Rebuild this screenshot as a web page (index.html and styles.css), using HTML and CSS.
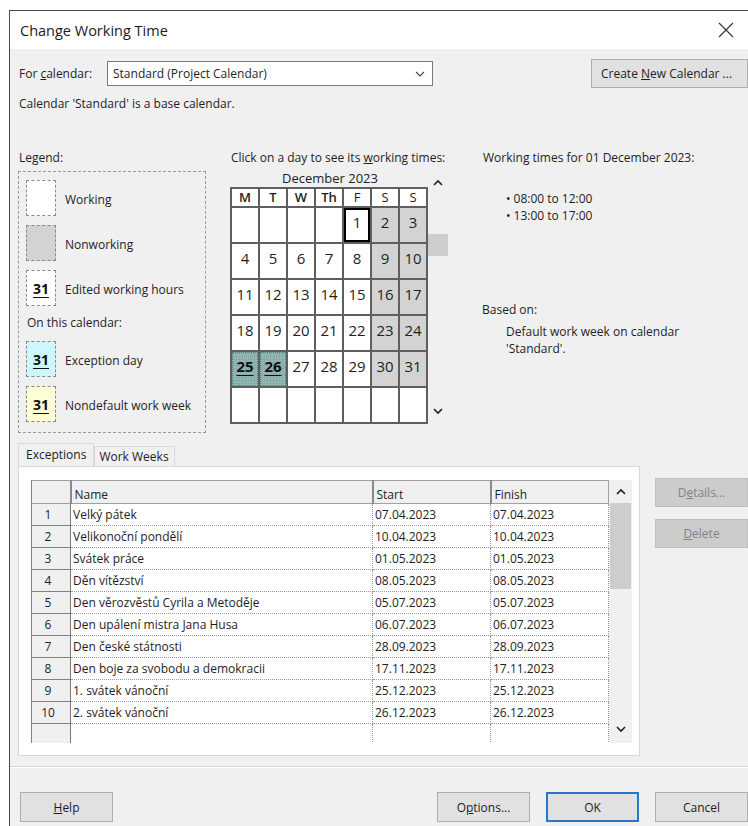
FILE: index.html
```html
<!DOCTYPE html>
<html lang="en">
<head>
<meta charset="utf-8">
<title>Change Working Time</title>
<link rel="stylesheet" href="styles.css">
</head>
<body>
<div class="dialog">
  <div class="titlebar">
    <span class="title">Change Working Time</span>
    <svg class="close" width="16" height="16" viewBox="0 0 16 16"><path d="M1 1L15 15M15 1L1 15" stroke="#333" stroke-width="1.1" fill="none"/></svg>
  </div>

  <div class="content">
    <div class="cal-row">
      <span class="lbl">For <u>c</u>alendar:</span>
      <div class="select">
        <span>Standard (Project Calendar)</span>
        <svg class="chev" width="10" height="6" viewBox="0 0 10 6"><path d="M1 1L5 5L9 1" stroke="#444" stroke-width="1.1" fill="none"/></svg>
      </div>
      <button class="btn create">Create <u>N</u>ew Calendar ...</button>
    </div>
    <div class="note">Calendar 'Standard' is a base calendar.</div>

    <div class="main">
      <div class="legend-col">
        <div class="cap">Legend:</div>
        <div class="legend">
          <div class="item"><span class="sw"></span><span>Working</span></div>
          <div class="item"><span class="sw nonwork"></span><span>Nonworking</span></div>
          <div class="item"><span class="sw"><b>31</b></span><span>Edited working hours</span></div>
          <div class="sub">On this calendar:</div>
          <div class="item"><span class="sw exc"><b>31</b></span><span>Exception day</span></div>
          <div class="item"><span class="sw nondef"><b>31</b></span><span>Nondefault work week</span></div>
        </div>
      </div>

      <div class="cal-col">
        <div class="cap">Click on a day to see its <u>w</u>orking times:</div>
        <div class="cal-wrap">
          <div class="cal">
            <div class="month">December 2023</div>
            <div class="grid">
              <div class="hd strong">M</div><div class="hd strong">T</div><div class="hd strong">W</div><div class="hd strong">Th</div><div class="hd">F</div><div class="hd">S</div><div class="hd">S</div>

              <div class="d"></div><div class="d"></div><div class="d"></div><div class="d"></div><div class="d sel">1</div><div class="d off">2</div><div class="d off">3</div>
              <div class="d">4</div><div class="d">5</div><div class="d">6</div><div class="d">7</div><div class="d">8</div><div class="d off">9</div><div class="d off">10</div>
              <div class="d">11</div><div class="d">12</div><div class="d">13</div><div class="d">14</div><div class="d">15</div><div class="d off">16</div><div class="d off">17</div>
              <div class="d">18</div><div class="d">19</div><div class="d">20</div><div class="d">21</div><div class="d">22</div><div class="d off">23</div><div class="d off">24</div>
              <div class="d ex"><b>25</b></div><div class="d ex"><b>26</b></div><div class="d">27</div><div class="d">28</div><div class="d">29</div><div class="d off">30</div><div class="d off">31</div>
              <div class="d"></div><div class="d"></div><div class="d"></div><div class="d"></div><div class="d"></div><div class="d"></div><div class="d"></div>
            </div>
          </div>
          <div class="cal-scroll">
            <svg width="10" height="7" viewBox="0 0 10 7"><path d="M1 6L5 2L9 6" stroke="#222" stroke-width="1.6" fill="none"/></svg>
            <span class="thumb"></span>
            <svg class="down" width="10" height="7" viewBox="0 0 10 7"><path d="M1 1L5 5L9 1" stroke="#222" stroke-width="1.6" fill="none"/></svg>
          </div>
        </div>
      </div>

      <div class="times-col">
        <div class="cap">Working times for 01 December 2023:</div>
        <ul class="times">
          <li>08:00 to 12:00</li>
          <li>13:00 to 17:00</li>
        </ul>
        <div class="based">Based on:</div>
        <div class="based-text">Default work week on calendar<br>'Standard'.</div>
      </div>
    </div>

    <div class="tabs">
      <span class="tab active">Exceptions</span>
      <span class="tab">Work Weeks</span>
    </div>

    <div class="panel-row">
      <div class="panel">
        <div class="table-box">
          <table class="grid-table">
            <colgroup><col class="c-num"><col class="c-name"><col class="c-date"><col class="c-date2"></colgroup>
            <thead>
              <tr><th class="num"></th><th>Name</th><th>Start</th><th>Finish</th></tr>
            </thead>
            <tbody>
              <tr><td class="num">1</td><td>Velký pátek</td><td>07.04.2023</td><td>07.04.2023</td></tr>
              <tr><td class="num">2</td><td>Velikonoční pondělí</td><td>10.04.2023</td><td>10.04.2023</td></tr>
              <tr><td class="num">3</td><td>Svátek práce</td><td>01.05.2023</td><td>01.05.2023</td></tr>
              <tr><td class="num">4</td><td>Děn vítězství</td><td>08.05.2023</td><td>08.05.2023</td></tr>
              <tr><td class="num">5</td><td>Den věrozvěstů Cyrila a Metoděje</td><td>05.07.2023</td><td>05.07.2023</td></tr>
              <tr><td class="num">6</td><td>Den upálení mistra Jana Husa</td><td>06.07.2023</td><td>06.07.2023</td></tr>
              <tr><td class="num">7</td><td>Den české státnosti</td><td>28.09.2023</td><td>28.09.2023</td></tr>
              <tr><td class="num">8</td><td>Den boje za svobodu a demokracii</td><td>17.11.2023</td><td>17.11.2023</td></tr>
              <tr><td class="num">9</td><td>1. svátek vánoční</td><td>25.12.2023</td><td>25.12.2023</td></tr>
              <tr><td class="num">10</td><td>2. svátek vánoční</td><td>26.12.2023</td><td>26.12.2023</td></tr>
              <tr class="blank"><td class="num"></td><td></td><td></td><td></td></tr>
            </tbody>
          </table>
          <div class="vscroll">
            <div class="arrow"><svg width="10" height="7" viewBox="0 0 10 7"><path d="M1 6L5 2L9 6" stroke="#222" stroke-width="1.6" fill="none"/></svg></div>
            <div class="vthumb"></div>
            <div class="arrow bottom"><svg width="10" height="7" viewBox="0 0 10 7"><path d="M1 1L5 5L9 1" stroke="#222" stroke-width="1.6" fill="none"/></svg></div>
          </div>
        </div>
      </div>
      <div class="side-btns">
        <button class="btn disabled">D<u>e</u>tails...</button>
        <button class="btn disabled"><u>D</u>elete</button>
      </div>
    </div>

    <div class="sep"></div>

    <div class="footer">
      <button class="btn foot"><u>H</u>elp</button>
      <span class="spacer"></span>
      <button class="btn foot">O<u>p</u>tions...</button>
      <button class="btn foot default">OK</button>
      <button class="btn foot">Cancel</button>
    </div>
  </div>
</div>
</body>
</html>
```

FILE: styles.css
```css
html, body {
  margin: 0;
  padding: 0;
  background: #ffffff;
}

body {
  font-family: "Open Sans", "Noto Sans", sans-serif;
  font-size: 12px;
  color: #1e1e1e;
  overflow: hidden;
}

.dialog {
  margin: 10px 0 0 9px;
  height: 816px;
  border-left: 1px solid #4a4a4a;
  border-top: 1px solid #4a4a4a;
  background: #f0f0f0;
  overflow: hidden;
}

/* title bar */
.titlebar {
  height: 38px;
  background: #ffffff;
  display: flex;
  align-items: center;
  padding-left: 10px;
}

.title {
  font-size: 14.5px;
  color: #1a1a1a;
  flex: 1;
}

.close {
  margin-right: 14px;
}

.content {
  padding: 10px 0 0 8px;
}

u {
  text-decoration: underline;
  text-underline-offset: 1px;
}

/* calendar selector row */
.cal-row {
  display: flex;
  align-items: center;
  height: 29px;
}

.lbl {
  width: 88px;
  padding-left: 1px;
}

.select {
  border: 1px solid #7a7a7a;
  background: #ffffff;
  display: flex;
  align-items: center;
  justify-content: space-between;
  padding: 0 7px 0 5px;
  box-sizing: border-box;
  width: 326px;
  height: 25px;
}

.btn {
  font-family: inherit;
  font-size: 12px;
  color: #1e1e1e;
  background: #e1e1e1;
  border: 1px solid #adadad;
  padding: 0;
  margin: 0;
}

.create {
  margin-left: auto;
  width: 157px;
  height: 29px;
  text-align: left;
  padding-left: 9px;
}

.note {
  margin-top: 7px;
  padding-left: 1px;
  line-height: 18px;
}

/* three columns: legend, month view, working times */
.main {
  display: flex;
  margin-top: 37px;
}

.cap {
  line-height: 16px;
  padding-left: 1px;
}

.legend-col {
  width: 188px;
}

.legend {
  margin-top: 5px;
  height: 262px;
  border: 1px dashed #9a9a9a;
  box-sizing: border-box;
  padding: 8px 0 0 7px;
}

.item {
  display: flex;
  align-items: center;
  height: 36px;
  margin-bottom: 9px;
}

.item > span:last-child {
  padding-top: 2px;
}

.sw {
  width: 30px;
  height: 36px;
  box-sizing: border-box;
  border: 1px dashed #8a8a8a;
  background: #ffffff;
  margin-right: 9px;
  display: flex;
  align-items: center;
  justify-content: center;
}

.sw b, .d.ex b {
  font-weight: 700;
  font-size: 14px;
  text-decoration: underline;
  text-decoration-thickness: 1px;
  text-underline-offset: 3px;
  color: #111;
}

.sw.nonwork { background: #d3d3d3; }
.sw.exc { background: #cdf7fb; }
.sw.nondef { background: #fdfdd6; }

.sub {
  margin: 3px 0 10px 1px;
  line-height: 16px;
}

.cal-col {
  margin-left: 24px;
  width: 252px;
}

.cal-wrap {
  display: flex;
  margin-top: 3px;
}

.cal {
  width: 198px;
}

.month {
  text-align: center;
  font-size: 13px;
  line-height: 18px;
  height: 18px;
  padding-left: 2px;
  background: #f0f0f0;
}

.grid {
  display: grid;
  grid-template-columns: repeat(7, 26px);
  grid-template-rows: 17px repeat(6, 34px);
  gap: 2px;
  padding: 2px 0 2px 2px;
  width: 198px;
  box-sizing: border-box;
  background: #5f5f5f;
}

.hd {
  background: #ffffff;
  text-align: center;
  font-size: 13px;
  line-height: 17px;
}

.hd.strong {
  font-weight: 600;
}

.d {
  background: #ffffff;
  text-align: center;
  font-size: 15px;
  line-height: 18px;
  padding-top: 5px;
  box-sizing: border-box;
}

.d.off {
  background: #d3d3d3;
}

.d.sel {
  box-shadow: inset 0 0 0 2px #000000;
}

.d.ex {
  background-color: #8fb4b2;
  background-image: radial-gradient(circle, rgba(60, 95, 95, 0.3) 0.6px, transparent 0.8px);
  background-size: 3px 3px;
  outline: 1px dotted #5c7c7a;
  outline-offset: -1px;
}

.d.ex b {
  font-size: 15px;
}

.cal-scroll {
  width: 20px;
  display: flex;
  flex-direction: column;
  align-items: center;
  padding-top: 10px;
}

.thumb {
  display: block;
  width: 20px;
  height: 22px;
  background: #cdcdcd;
  margin-top: 48px;
}

.cal-scroll .down {
  margin-top: 152px;
}

.times-col {
  margin-left: 0;
}

.times {
  margin: 24px 0 0 0;
  padding: 0 0 0 24px;
  list-style: none;
  font-size: 12px;
  line-height: 17px;
}

.times li::before {
  content: "\2022";
  margin-right: 3px;
}

.based {
  margin-top: 78px;
  line-height: 16px;
}

.based-text {
  margin-top: 5px;
  padding-left: 24px;
  line-height: 17px;
}

/* tabs */
.tabs {
  margin-top: 10px;
  display: flex;
  align-items: flex-end;
  height: 23px;
}

.tab {
  height: 20px;
  line-height: 20px;
  padding: 0 5px 0 4px;
  border: 1px solid #d9d9d9;
  border-bottom: none;
  background: #f0f0f0;
  box-sizing: border-box;
}

.tab.active {
  height: 23px;
  line-height: 22px;
  padding: 0 7px 0 7px;
  border-color: #d9d9d9;
  background: #f0f0f0;
}

.panel-row {
  display: flex;
  align-items: flex-start;
}

.panel {
  width: 623px;
  height: 290px;
  box-sizing: border-box;
  background: #ffffff;
  border: 1px solid #d9d9d9;
  padding: 13px 0 0 12px;
}

.table-box {
  display: flex;
  height: 263px;
  overflow: hidden;
}

.grid-table {
  border-collapse: collapse;
  table-layout: fixed;
  width: 577px;
  font-size: 12px;
}

.c-num { width: 39px; }
.c-name { width: 302px; }
.c-date { width: 118px; }
.c-date2 { width: 118px; }

.grid-table th {
  height: 22px;
  background: #f0f0f0;
  font-weight: 400;
  text-align: left;
  vertical-align: bottom;
  padding: 0 0 0 3px;
  line-height: 16px;
  border: 1px solid #a0a0a0;
  border-left: 2px solid #8a8a8a;
}

.grid-table th.num {
  border-left: 1px solid #808080;
}

.grid-table td {
  height: 21px;
  padding: 0 0 0 2px;
  line-height: 16px;
  border-bottom: 1px dotted #9a9a9a;
  border-right: 1px dotted #9a9a9a;
  white-space: nowrap;
  overflow: hidden;
}

.grid-table td:nth-child(2) {
  border-left: 1px solid #7a7a7a;
}

.grid-table td.num {
  background: #f0f0f0;
  text-align: center;
  padding: 0 6px 0 0;
  border: 1px solid #808080;
  border-right: 1px solid #7a7a7a;
}

.vscroll {
  width: 23px;
  background: #f0f0f0;
  display: flex;
  flex-direction: column;
  align-items: center;
}

.vscroll .arrow {
  height: 23px;
  display: flex;
  align-items: center;
  justify-content: center;
}

.vscroll .arrow.bottom {
  margin-top: auto;
  height: 28px;
}

.vthumb {
  width: 21px;
  height: 86px;
  background: #cdcdcd;
}

.side-btns {
  margin-left: 15px;
  margin-top: 12px;
  display: flex;
  flex-direction: column;
  gap: 12px;
}

.btn.disabled {
  width: 93px;
  height: 29px;
  background: #cccccc;
  border-color: #bfbfbf;
  color: #838383;
}

.sep {
  margin: 10px 0 0 -8px;
  height: 0;
  border-top: 1px solid #d6d6d6;
  border-bottom: 1px solid #ffffff;
}

.footer {
  display: flex;
  margin-top: 24px;
  padding-left: 2px;
  gap: 16px;
}

.spacer {
  flex: 1;
}

.btn.foot {
  width: 93px;
  height: 30px;
}

.btn.default {
  border: 2px solid #2a76c9;
}
```
